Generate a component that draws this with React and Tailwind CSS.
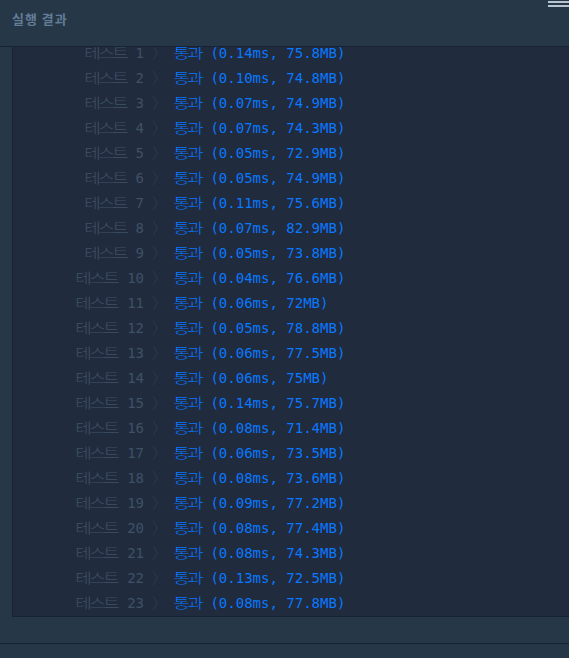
import React from 'react';

const results = [
  ['0.14ms', '75.8MB'],
  ['0.10ms', '74.8MB'],
  ['0.07ms', '74.9MB'],
  ['0.07ms', '74.3MB'],
  ['0.05ms', '72.9MB'],
  ['0.05ms', '74.9MB'],
  ['0.11ms', '75.6MB'],
  ['0.07ms', '82.9MB'],
  ['0.05ms', '73.8MB'],
  ['0.04ms', '76.6MB'],
  ['0.06ms', '72MB'],
  ['0.05ms', '78.8MB'],
  ['0.06ms', '77.5MB'],
  ['0.06ms', '75MB'],
  ['0.14ms', '75.7MB'],
  ['0.08ms', '71.4MB'],
  ['0.06ms', '73.5MB'],
  ['0.08ms', '73.6MB'],
  ['0.09ms', '77.2MB'],
  ['0.08ms', '77.4MB'],
  ['0.08ms', '74.3MB'],
  ['0.13ms', '72.5MB'],
  ['0.08ms', '77.8MB'],
];

const mono = "font-['DejaVu_Sans_Mono','Noto_Sans_CJK_KR',monospace]";

// hangul in a full-width cell, stretched like the console font
const Wide = ({ text }) => (
  <>
    {text.split('').map((c, i) => (
      <span key={i} className="inline-block w-[14px] text-center">
        <span className="inline-block scale-x-[1.28] font-['Noto_Sans_CJK_KR',sans-serif] font-light">{c}</span>
      </span>
    ))}
  </>
);

const Chevron = () => (
  <svg width="7" height="16" viewBox="0 0 7 16" className="shrink-0">
    <polyline points="1,1 5.5,8 1,15" fill="none" stroke="#2c3b4f" strokeWidth="1" />
  </svg>
);

const ResultRow = ({ n, time, mem }) => (
  <div className={`flex items-center h-[25px] text-[14px] leading-[25px] ${mono}`}>
    <div className="w-[131px] shrink-0 text-right text-[#3f5167] whitespace-pre">
      <Wide text="테스트" /> {n}
    </div>
    <div className="ml-[8px] w-[22px] flex items-center">
      <Chevron />
    </div>
    <div className="text-[#0a78ff] whitespace-pre">
      <Wide text="통과" /> ({time}, {mem})
    </div>
  </div>
);

export default function App() {
  return (
    <div className="w-[569px] h-[658px] bg-[#263747] overflow-hidden flex flex-col">
      {/* header */}
      <div className="relative h-[47px] shrink-0 border-b border-[#172334] flex items-center px-[12px]">
        <span className="text-[13px] font-bold tracking-[1px] text-[#627c96] font-['Noto_Sans_CJK_KR',sans-serif] -mt-[8px]">
          실행 결과
        </span>
        <div className="absolute right-0 top-[1px] w-[21px] flex flex-col gap-[2px]">
          <div className="h-[2px] bg-[#b8c4d0]" />
          <div className="h-[2px] bg-[#b8c4d0]" />
        </div>
      </div>

      {/* console */}
      <div className="ml-[12px] h-[570px] shrink-0 bg-[#202b3d] border-l border-b border-[#172334] overflow-hidden">
        <div className="-mt-[7px]">
          {results.map(([time, mem], i) => (
            <ResultRow key={i} n={i + 1} time={time} mem={mem} />
          ))}
        </div>
      </div>

      <div className="h-[27px] shrink-0 border-b border-[#172334]" />
      <div className="flex-1" />
    </div>
  );
}
